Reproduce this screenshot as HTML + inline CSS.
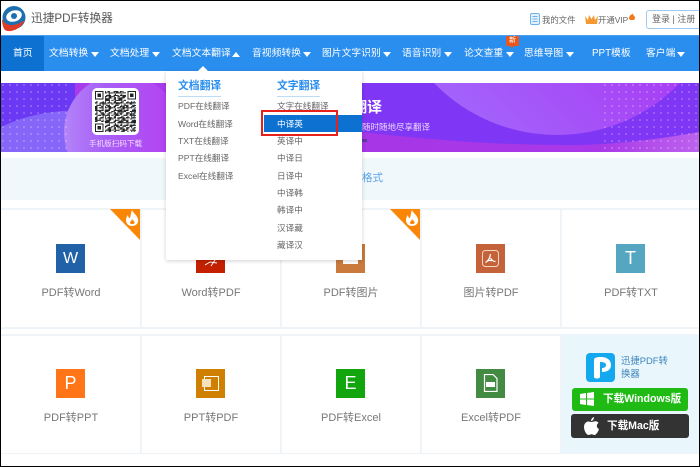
<!DOCTYPE html>
<html lang="zh"><head><meta charset="utf-8">
<style>
*{box-sizing:border-box;margin:0;padding:0}
html,body{width:700px;height:467px;overflow:hidden;background:#fff}
body{position:relative;font-family:"Liberation Sans","Noto Sans CJK SC",sans-serif;color:#666}
#w{position:absolute;left:0;top:0;width:700px;height:467px;filter:blur(.3px)}
.a{position:absolute;white-space:nowrap}
.nav{position:absolute;left:0;top:35px;width:700px;height:36px;background:#2a8eef;border-top:1px solid #4aa0f2}
.n{position:absolute;top:47px;font-size:9.8px;line-height:14px;color:#fff;white-space:nowrap}
.ar{position:absolute;top:52px;width:0;height:0;border-left:4.5px solid transparent;border-right:4.5px solid transparent;border-top:5px solid #fff}
.menu{position:absolute;left:166px;top:71px;width:196px;height:189px;background:#fff;box-shadow:0 1px 4px rgba(0,0,0,.18)}
.mi{position:absolute;font-size:8.6px;line-height:12px;color:#666;white-space:nowrap}
.mh{position:absolute;font-size:10.8px;line-height:14px;color:#2a8eef;font-weight:bold;white-space:nowrap}
.ul{position:absolute;height:1px;width:43px;background:#bcdcf8}
.vl{position:absolute;width:2px;background:#eef4f7}
.hl{position:absolute;left:1px;width:698px;height:2px;background:#eef4f7}
.ic{position:absolute;width:29px;height:29px;color:#fff;text-align:center;font-size:18px;line-height:29px}
.lb{position:absolute;width:140px;text-align:center;font-size:11px;line-height:14px;color:#777;white-space:nowrap}
.fire{position:absolute;width:31px;height:31px}
</style></head><body>
<div id="w">
<!-- top bar -->
<svg class="a" style="left:1px;top:5px" width="25" height="27" viewBox="0 0 25 27">
<circle cx="13" cy="12.500" r="11.500" fill="#1d6fb0"/>
<ellipse cx="13" cy="11" rx="8" ry="5.500" fill="#fff" transform="rotate(-18 13 11)"/>
<circle cx="13" cy="11" r="3" fill="#1d6fb0"/>
<path d="M1 14C5 22 14 22 24 15C20 25 8 28 4 25C2 23 1 18 1 14Z" fill="#df3b26"/>
</svg>
<div class="a" style="left:31px;top:11px;font-size:11.7px;line-height:15px;color:#555">迅捷PDF转换器</div>

<svg class="a" style="left:530px;top:13px" width="10" height="12" viewBox="0 0 10 12"><rect x=".5" y=".5" width="9" height="11" rx="1.500" fill="#e4f1fc" stroke="#6fb3ea"/><path d="M2.500 3.500h5M2.500 6h5M2.500 8.500h5" stroke="#6fb3ea"/></svg>
<div class="a" style="left:542px;top:14px;font-size:8.4px;line-height:12px;color:#666">我的文件</div>
<svg class="a" style="left:585px;top:14px" width="13" height="11" viewBox="0 0 13 11"><path d="M0 2L3 6L4 1L6.500 5L9 1L10 6L13 2L12 10H1Z" fill="#f59a33"/></svg>
<div class="a" style="left:598px;top:14px;font-size:8.4px;line-height:12px;color:#666">开通VIP</div>
<svg class="a" style="left:629px;top:13px" width="6" height="7" viewBox="0 0 6 7"><path d="M3 0C4 2 6 3 6 5A3 2.500 0 0 1 0 5C0 3.500 1 3 1 2C2 2.500 3 2 3 0Z" fill="#f27a1a"/></svg>
<div class="a" style="left:646px;top:10px;width:56px;height:19px;border:1px solid #9fcbf2;border-radius:3px;font-size:9px;line-height:17px;padding-left:5px;color:#666">登录 | 注册</div>

<!-- nav -->
<div class="nav"></div>
<div class="a" style="left:1px;top:36px;width:43px;height:35px;background:#0d71d2"></div>
<div class="n" style="left:13px">首页</div>
<div class="n" style="left:49px">文档转换</div><div class="ar" style="left:91px"></div>
<div class="n" style="left:110px">文档处理</div><div class="ar" style="left:152px"></div>
<div class="n" style="left:172px">文档文本翻译</div><div class="ar" style="left:232px;border-top:0;border-bottom:5px solid #fff"></div>
<div class="n" style="left:252px">音视频转换</div><div class="ar" style="left:303px"></div>
<div class="n" style="left:322px">图片文字识别</div><div class="ar" style="left:383px"></div>
<div class="n" style="left:402px">语音识别</div><div class="ar" style="left:444px"></div>
<div class="n" style="left:464px">论文查重</div><div class="ar" style="left:506px"></div>
<div class="n" style="left:524px">思维导图</div><div class="ar" style="left:566px"></div>
<div class="n" style="left:592px">PPT模板</div>
<div class="n" style="left:646px">客户端</div><div class="ar" style="left:677px"></div>
<div class="a" style="left:506px;top:36px;width:13px;height:10px;background:#e9561b;border-radius:1px;color:#fff;font-size:7px;line-height:10px;text-align:center">新</div>
<div class="a" style="left:510px;top:46px;border-left:2px solid transparent;border-right:2px solid transparent;border-top:2px solid #e9561b"></div>

<!-- banner -->
<svg class="a" style="left:1px;top:83px" width="698" height="69" viewBox="0 0 698 69">
<defs>
<linearGradient id="c1" x1="0" x2="1" y1="0" y2="0"><stop offset="0" stop-color="#b384f9"/><stop offset=".35" stop-color="#a85ef6"/><stop offset="1" stop-color="#b53ff0"/></linearGradient>
<linearGradient id="c2" x1="0" x2="1" y1="1" y2="0"><stop offset=".15" stop-color="#a362fb"/><stop offset=".6" stop-color="#a934f3"/><stop offset="1" stop-color="#a936ef"/></linearGradient>
<linearGradient id="wv" x1="0" x2="1" y1="0" y2="0"><stop offset="0" stop-color="#a636e6"/><stop offset=".7" stop-color="#a838e8"/><stop offset="1" stop-color="#bd62ee"/></linearGradient>
<pattern id="d" width="7" height="7" patternUnits="userSpaceOnUse"><circle cx="2" cy="2" r=".8" fill="#fff" opacity=".6"/></pattern>
</defs>
<rect width="698" height="69" fill="#7f36f5"/>
<rect width="170" height="69" fill="#6b38f4"/>
<path d="M0 44C25 32 50 27 90 27V69H0Z" fill="#8566f9"/>
<rect x="74" y="0" width="96" height="18" fill="#a83bea"/>
<circle cx="121" cy="49" r="58" fill="url(#c1)"/>
<rect x="0" y="0" width="70" height="66" fill="url(#d)" opacity=".75"/>
<circle cx="556" cy="-119.500" r="171.500" fill="url(#c2)"/>
<path d="M361 49C440 58 500 62 570 62C610 62 660 56 698 49V69H361Z" fill="url(#wv)"/>
<rect x="600" y="0" width="98" height="69" fill="url(#d)" opacity=".75"/>
<rect x="361" y="56" width="5" height="3" fill="#5e3aa0"/>
</svg>
<div class="a" style="left:92px;top:88px;width:47px;height:47px;background:#fff;border-radius:5px"></div>
<svg class="a" style="left:95px;top:91px" width="41" height="41" viewBox="0 0 33 33" shape-rendering="crispEdges">
<defs>
<pattern id="q1" width="5" height="3" patternUnits="userSpaceOnUse"><path d="M0 0h2v1h-2zM3 1h2v1h-2zM1 2h1v1h-1z" fill="#222"/></pattern>
<pattern id="q2" width="7" height="4" patternUnits="userSpaceOnUse"><path d="M1 0h1v2h-1zM4 1h3v1h-3zM2 3h3v1h-3z" fill="#222"/></pattern>
<pattern id="q3" width="11" height="9" patternUnits="userSpaceOnUse"><path d="M0 3h2v3h-2zM6 0h2v2h-2zM8 6h3v2h-3z" fill="#222"/></pattern>
</defs>
<rect width="33" height="33" fill="url(#q1)"/><rect width="33" height="33" fill="url(#q2)"/><rect width="33" height="33" fill="url(#q3)"/>
<path d="M0 0h8v8h-8zM25 0h8v8h-8zM0 25h8v8h-8z" fill="#fff"/>
<path d="M0 0h7v7h-7zM26 0h7v7h-7zM0 26h7v7h-7z" fill="#222"/><path d="M1 1h5v5h-5zM27 1h5v5h-5zM1 27h5v5h-5z" fill="#fff"/><path d="M2 2h3v3h-3zM28 2h3v3h-3zM2 28h3v3h-3z" fill="#222"/>
</svg>
<div class="a" style="left:89px;top:138px;font-size:7.6px;line-height:11px;color:#f3dcff">手机版扫码下载</div>
<div class="a" style="left:352px;top:99px;font-size:15px;line-height:18px;color:#fff;font-weight:bold">翻译</div>
<div class="a" style="left:362px;top:121px;width:68px;text-align:right;overflow:hidden;font-size:8.500px;line-height:12px;color:#ecd6ff">随时随地尽享翻译</div>

<!-- strip -->
<div class="a" style="left:1px;top:158px;width:698px;height:42px;background:#f0f8fc"></div>
<div class="a" style="left:362px;top:171px;font-size:10.5px;line-height:14px;color:#5aa2e6">格式</div>

<!-- grid lines -->
<div class="hl" style="top:208px;height:1.5px"></div><div class="hl" style="top:327px"></div>
<div class="hl" style="top:334px;height:1.5px"></div><div class="hl" style="top:452.500px;height:1.5px"></div>
<div class="vl" style="left:140px;top:209px;height:118px"></div>
<div class="vl" style="left:280px;top:209px;height:118px"></div>
<div class="vl" style="left:420px;top:209px;height:118px"></div>
<div class="vl" style="left:560px;top:209px;height:118px"></div>
<div class="vl" style="left:140px;top:335px;height:118px"></div>
<div class="vl" style="left:280px;top:335px;height:118px"></div>
<div class="vl" style="left:420px;top:335px;height:118px"></div>
<div class="vl" style="left:560px;top:335px;height:118px"></div>

<!-- hot corners -->
<svg class="fire" style="left:110px;top:209px" viewBox="0 0 31 31"><path d="M0 0H30V31Z" fill="#fb8606"/><path fill-rule="evenodd" d="M22 1C23 4 27 6 28 10C29 14 26 17 22 17C18 17 16 14 16 11C16 9 17 7 18 6C18 8 19 9 20 9C21 6 21 3 22 1ZM22 10C23 12 25 12 24.500 14C24 15.500 20.500 15.500 20 14C19.800 13 21.500 12 22 10Z" fill="#fff"/></svg>
<svg class="fire" style="left:390px;top:209px" viewBox="0 0 31 31"><path d="M0 0H30V31Z" fill="#fb8606"/><path fill-rule="evenodd" d="M22 1C23 4 27 6 28 10C29 14 26 17 22 17C18 17 16 14 16 11C16 9 17 7 18 6C18 8 19 9 20 9C21 6 21 3 22 1ZM22 10C23 12 25 12 24.500 14C24 15.500 20.500 15.500 20 14C19.800 13 21.500 12 22 10Z" fill="#fff"/></svg>

<!-- icons row 1 -->
<div class="ic" style="left:56px;top:244px;background:#2161a8;font-size:16px">W</div>
<div class="ic" style="left:196px;top:244px;background:#c42000"><svg style="position:absolute;left:0;top:0" width="29" height="29" viewBox="0 0 29 29"><path d="M9 21L14 18M14 18L21 19M19 16L15 22" fill="none" stroke="#fff" stroke-width="1"/></svg></div>
<div class="ic" style="left:336px;top:244px;background:#c97a3c"><svg style="position:absolute;left:0;top:0" width="29" height="29" viewBox="0 0 29 29"><rect x="7" y="16" width="15" height="4" fill="#fff"/></svg></div>
<div class="ic" style="left:476px;top:244px;background:#c4623a"><svg style="position:absolute;left:6px;top:6px" width="17" height="17" viewBox="0 0 17 17"><rect x=".5" y=".5" width="16" height="16" rx="3" fill="none" stroke="#f3d8c8"/><path d="M8.500 4C8 8 6 11 3.500 12.500M8.500 8C9.500 10 11.500 11.500 13.500 11.500M6 10.500H11" fill="none" stroke="#fff" stroke-width="1.200"/></svg></div>
<div class="ic" style="left:616px;top:244px;background:#54a6c1">T</div>
<div class="lb" style="left:1px;top:286px">PDF转Word</div>
<div class="lb" style="left:141px;top:286px">Word转PDF</div>
<div class="lb" style="left:281px;top:286px">PDF转图片</div>
<div class="lb" style="left:421px;top:286px">图片转PDF</div>
<div class="lb" style="left:561px;top:286px">PDF转TXT</div>

<!-- icons row 2 -->
<div class="ic" style="left:56px;top:369px;background:#ff7518">P</div>
<div class="ic" style="left:196px;top:369px;background:#d08000"><svg style="position:absolute;left:6px;top:7px" width="17" height="15" viewBox="0 0 17 15"><rect x="2.500" y=".5" width="14" height="14" fill="none" stroke="#fff"/><rect x="0" y="3" width="9" height="8" fill="#f5e2bd"/></svg></div>
<div class="ic" style="left:336px;top:369px;background:#12a50e">E</div>
<div class="ic" style="left:476px;top:369px;background:#438a42"><svg style="position:absolute;left:7px;top:5px" width="15" height="18" viewBox="0 0 15 18"><path d="M1.500.5H10L14 4.500V17.500H1.500Z" fill="none" stroke="#fff" stroke-width="1.200"/><rect x="3" y="8" width="9" height="5" fill="#fff"/></svg></div>
<div class="lb" style="left:1px;top:411px">PDF转PPT</div>
<div class="lb" style="left:141px;top:411px">PPT转PDF</div>
<div class="lb" style="left:281px;top:411px">PDF转Excel</div>
<div class="lb" style="left:421px;top:411px">Excel转PDF</div>

<!-- download -->
<div class="a" style="left:562px;top:335px;width:137px;height:118px;background:#e9f6fb"></div>
<svg class="a" style="left:586px;top:353px" width="29" height="29" viewBox="0 0 29 29"><rect width="29" height="29" rx="4" fill="#14a8ee"/><path d="M8 24V7C8 5 10 4 15 4C21 4 25 7 25 12C25 17 21 19 16 19V15C18 15 20 14 20 12C20 10 18 9 14 9V24C14 26 8 26 8 24Z" fill="#fff"/></svg>
<div class="a" style="left:621px;top:354px;font-size:9.400px;line-height:13px;color:#3c84bc">迅捷PDF转<br>换器</div>
<div class="a" style="left:572px;top:388px;width:116px;height:23px;background:#1fbb14;border-radius:3px"></div>
<svg class="a" style="left:580px;top:392px" width="14" height="14" viewBox="0 0 14 14"><path d="M0 2L6 1V6.500H0ZM7 1L14 0V6.500H7ZM0 7.500H6V13L0 12ZM7 7.500H14V14L7 13Z" fill="#fff"/></svg>
<div class="a" style="left:603px;top:391px;font-size:10.6px;line-height:16px;color:#fff;font-weight:bold">下载Windows版</div>
<div class="a" style="left:571px;top:414px;width:118px;height:24px;background:#333;border-radius:3px"></div>
<svg class="a" style="left:584px;top:417px" width="15" height="18" viewBox="0 0 15 18"><path d="M10 0C10 2.500 8.500 4 7 4C7 2 8.500 .5 10 0ZM7.500 5C9 5 10 4.300 11.500 4.300C12.800 4.300 14 5 14.500 6C12 7.500 12.500 11 15 12C14 15 12 18 10.500 18C9.300 18 8.800 17.300 7.500 17.300C6.200 17.300 5.700 18 4.500 18C2.500 18 0 13.500 0 10C0 6.500 2.300 4.500 4.300 4.500C5.500 4.500 6.500 5 7.500 5Z" fill="#fff"/></svg>
<div class="a" style="left:607px;top:418px;font-size:10.6px;line-height:16px;color:#fff;font-weight:bold">下载Mac版</div>

<!-- dropdown -->
<div class="menu"></div>
<div class="a" style="left:197px;top:66px;border-left:6px solid transparent;border-right:6px solid transparent;border-bottom:6px solid #fff"></div>
<div class="mh" style="left:178px;top:79px">文档翻译</div><div class="ul" style="left:178px;top:96px"></div>
<div class="mh" style="left:277px;top:79px">文字翻译</div><div class="ul" style="left:277px;top:96px"></div>
<div class="mi" style="left:178px;top:100px">PDF在线翻译</div>
<div class="mi" style="left:178px;top:118px">Word在线翻译</div>
<div class="mi" style="left:178px;top:135px">TXT在线翻译</div>
<div class="mi" style="left:178px;top:152px">PPT在线翻译</div>
<div class="mi" style="left:178px;top:170px">Excel在线翻译</div>
<div class="mi" style="left:277px;top:100px">文字在线翻译</div>
<div class="a" style="left:264px;top:115px;width:98px;height:17px;background:#0d71d2"></div>
<div class="mi" style="left:277px;top:118px;color:#fff">中译英</div>
<div class="mi" style="left:277px;top:135px">英译中</div>
<div class="mi" style="left:277px;top:152px">中译日</div>
<div class="mi" style="left:277px;top:170px">日译中</div>
<div class="mi" style="left:277px;top:187px">中译韩</div>
<div class="mi" style="left:277px;top:204px">韩译中</div>
<div class="mi" style="left:277px;top:222px">汉译藏</div>
<div class="mi" style="left:277px;top:239px">藏译汉</div>
<div class="a" style="left:261px;top:110px;width:77px;height:26px;border:2px solid #e8201c"></div>
</div>
<!-- frame -->
<div class="a" style="left:0;top:0;width:700px;height:467px;border:1px solid #000"></div>
</body></html>
